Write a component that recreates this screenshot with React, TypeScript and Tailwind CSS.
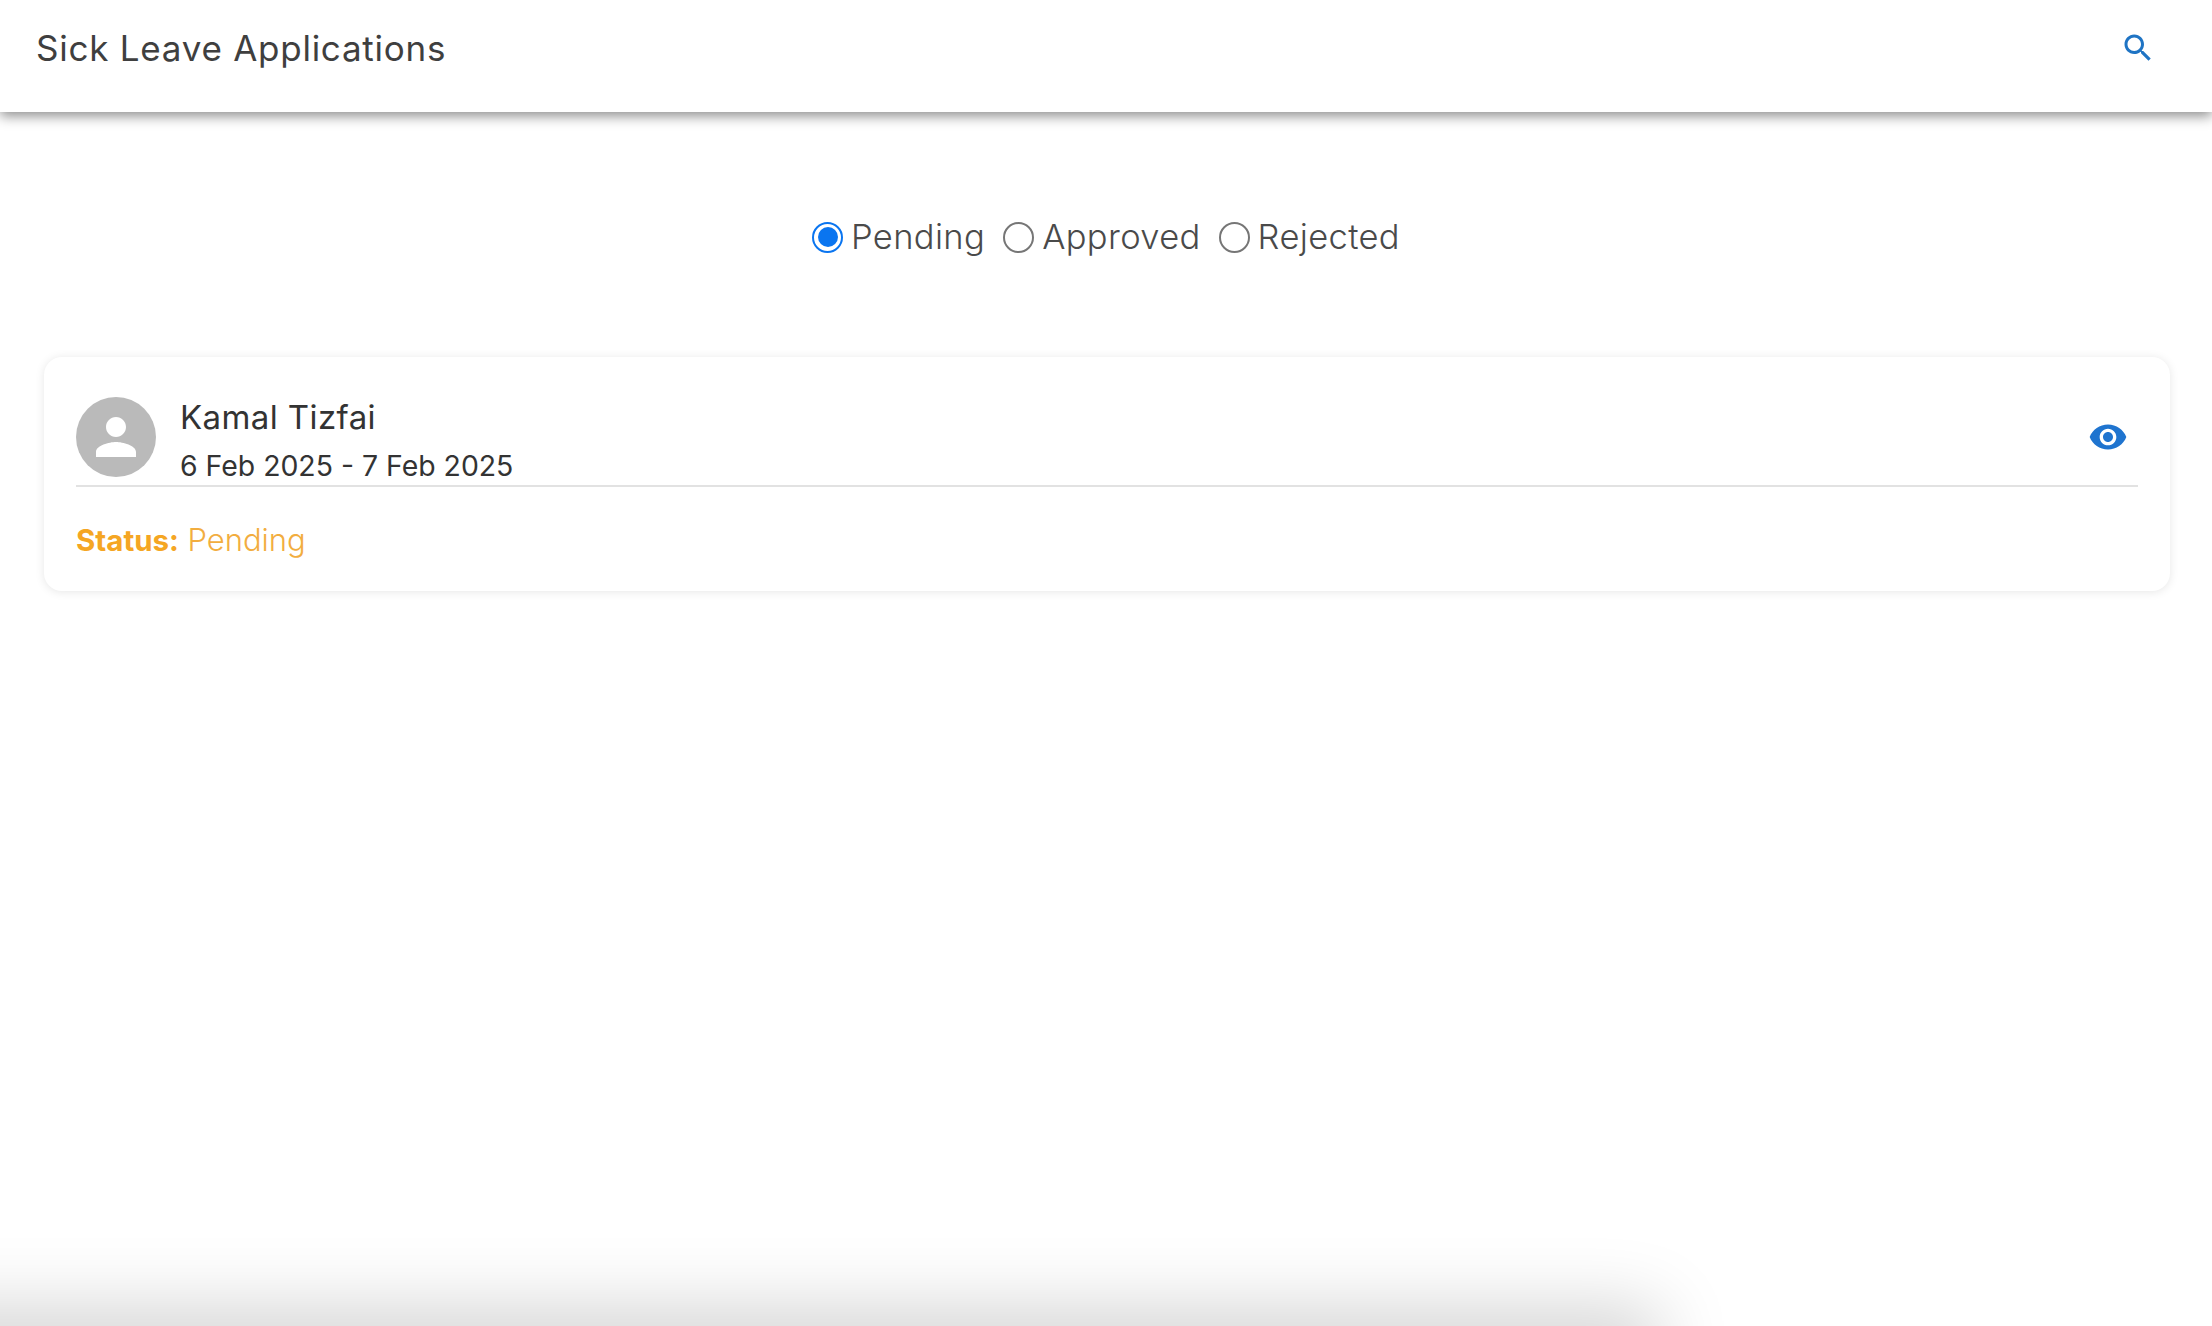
const font = { fontFamily: '"Inter", "Noto Sans", sans-serif' }

function Radio({ label, checked }: { label: string; checked?: boolean }) {
  return (
    <label className="flex items-center gap-[8px]">
      <span className={`grid h-[31px] w-[31px] place-items-center rounded-full border-[2.5px] ${checked ? 'border-[#0a75f0]' : 'border-[#767676]'}`}>
        {checked && <span className="h-[20px] w-[20px] rounded-full bg-[#0a75f0]" />}
      </span>
      <span className="text-[34.5px] font-light leading-none tracking-[0.35px] text-[#4a4a4a]">{label}</span>
    </label>
  )
}

export default function App() {
  return (
    <div style={font} className="relative h-screen w-full overflow-hidden bg-white">
      <header className="flex h-[112px] items-center justify-between bg-white pb-[16px] pl-[36px] pr-[56px] shadow-[0_4px_12px_rgba(0,0,0,.45)]">
        <h1 className="text-[35px] font-normal leading-none tracking-[0.75px] text-[#3f3f3f]">Sick Leave Applications</h1>
        <svg viewBox="0 0 24 24" className="h-[36px] w-[36px] fill-[#1f74c4]">
          <path d="M15.5 14h-.79l-.28-.27C15.41 12.59 16 11.11 16 9.5 16 5.91 13.09 3 9.5 3S3 5.91 3 9.5 5.91 16 9.5 16c1.61 0 3.09-.59 4.23-1.57l.27.28v.79l5 4.99L20.49 19l-4.99-5zm-6 0C7.01 14 5 11.99 5 9.5S7.01 5 9.5 5 14 7.01 14 9.5 11.99 14 9.5 14z" />
        </svg>
      </header>

      <div className="flex h-[245px] items-start justify-center gap-[18px] pt-[108px]">
        <Radio label="Pending" checked />
        <Radio label="Approved" />
        <Radio label="Rejected" />
      </div>

      <section className="ml-[44px] mr-[42px] rounded-[18px] bg-white px-[32px] pt-[40px] pb-[33px] shadow-[0_1px_10px_rgba(0,0,0,.1)]">
        <div className="flex items-start justify-between border-b-2 border-[#e2e2e2] pb-[1px]">
          <div className="flex items-start gap-[24px]">
            <div className="grid h-[80px] w-[80px] place-items-center rounded-full bg-[#bababa]">
              <svg viewBox="0 0 24 24" className="h-[60px] w-[60px] fill-white">
                <path d="M12 12c2.21 0 4-1.79 4-4s-1.79-4-4-4-4 1.79-4 4 1.79 4 4 4zm0 2c-2.67 0-8 1.34-8 4v2h16v-2c0-2.66-5.33-4-8-4z" />
              </svg>
            </div>
            <div className="text-[#333333]">
              <div className="text-[33px] leading-[40px] tracking-[0.4px]">Kamal Tizfai</div>
              <div className="mt-[11px] text-[28.4px] leading-[36px]">6 Feb 2025 - 7 Feb 2025</div>
            </div>
          </div>
          <svg viewBox="0 0 24 24" className="mr-[10px] mt-[20px] h-[40px] w-[40px] fill-[#1f74cf]">
            <path d="M12 4.5C7 4.5 2.73 7.61 1 12c1.73 4.39 6 7.5 11 7.5s9.27-3.11 11-7.5c-1.73-4.39-6-7.5-11-7.5zM12 17c-2.76 0-5-2.24-5-5s2.24-5 5-5 5 2.24 5 5-2.24 5-5 5zm0-8c-1.66 0-3 1.34-3 3s1.34 3 3 3 3-1.34 3-3-1.34-3-3-3z" />
          </svg>
        </div>
        <p className="mt-[35px] text-[30px] leading-[36px]">
          <span className="text-[29.5px] font-bold text-[#f5a623]">Status:</span> <span className="text-[31px] font-light text-[#f2ad3f]">Pending</span>
        </p>
      </section>

      <div className="absolute -bottom-[40px] -left-[100px] h-[40px] w-[1740px] shadow-[0_0_70px_20px_rgba(0,0,0,.17)]" />
    </div>
  )
}
